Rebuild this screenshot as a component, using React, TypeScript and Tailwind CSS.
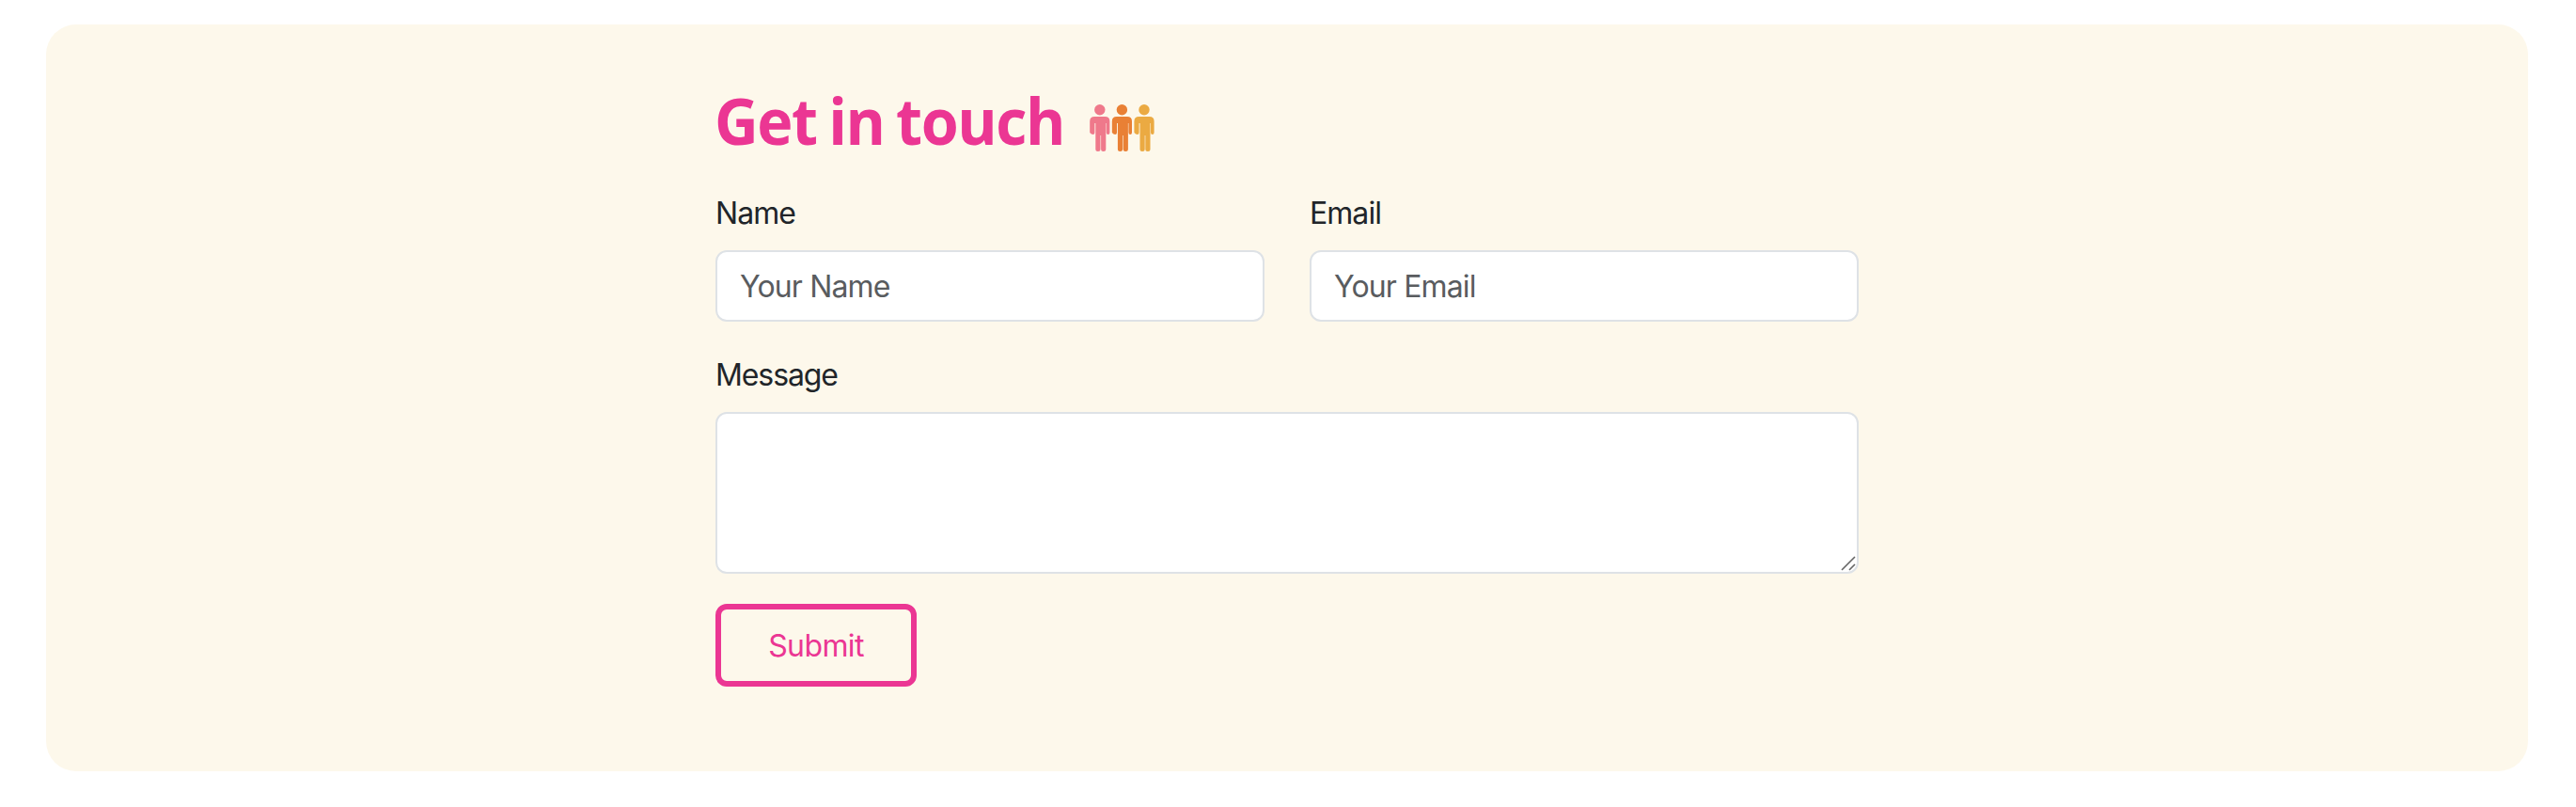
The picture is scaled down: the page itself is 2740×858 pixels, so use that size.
const people = [
  { x: 0, color: "#ef798b" },
  { x: 23.6, color: "#e98035" },
  { x: 47.2, color: "#ebaa42" },
];

function PeopleIcon() {
  return (
    <svg className="mt-[29px] ml-[28px] h-[50px] w-[69px] shrink-0" viewBox="0 0 69 50" aria-hidden="true">
      {people.map((p) => (
        <g key={p.color} transform={`translate(${p.x} 0)`} fill={p.color}>
          <circle cx="10.8" cy="5.8" r="5.7" />
          <path d="M5.2 12.9h11.2q5 0 5 5V30q0 1.9-1.8 1.9t-1.8-1.9V20h-.5v27.4q0 2.500-2.600 2.500t-2.600-2.500V33h-.6v14.400q0 2.500-2.600 2.500t-2.600-2.500V20h-.9V30q0 1.900-1.800 1.900T.2 30V17.900q0-5 5-5Z" />
        </g>
      ))}
    </svg>
  );
}

function Field({ id, label, placeholder, type }: { id: string; label: string; placeholder: string; type: string }) {
  return (
    <div className="flex flex-1 flex-col">
      <label htmlFor={id} className="h-12 pt-px text-[32px] leading-[48px] tracking-[-0.95px]">
        {label}
      </label>
      <input
        id={id}
        type={type}
        placeholder={placeholder}
        className="mt-4 h-[76px] w-full rounded-xl border-2 border-[#dee2e6] bg-white px-6 text-[32px] tracking-[-0.85px] outline-none placeholder:text-[#595c5f] placeholder:opacity-100"
      />
    </div>
  );
}

export default function App() {
  return (
    <main className="h-[858px] bg-white px-[49px] pt-[26px] font-['Inter','Liberation_Sans',sans-serif] text-[#212529]">
      <section className="h-[794px] w-[2640px] rounded-[32px] bg-[#fdf8eb] px-[712px] pt-[56px]">
        <div className="flex h-[120px]">
          <h1 className="-mt-0.5 -ml-px w-[371px] origin-left scale-x-[0.95] font-['Open_Sans','Noto_Sans',sans-serif] text-[68px] leading-[96px] font-[680] tracking-[-1.5px] [word-spacing:-3px] whitespace-nowrap text-[#eb3693]">
            Get in touch
          </h1>
          <PeopleIcon />
        </div>
        <form className="flex w-[1216px] flex-col items-start" onSubmit={(e) => e.preventDefault()}>
          <div className="flex w-full gap-12">
            <Field id="name" label="Name" placeholder="Your Name" type="text" />
            <Field id="email" label="Email" placeholder="Your Email" type="email" />
          </div>
          <label htmlFor="message" className="mt-8 h-12 pt-px text-[32px] leading-[48px] tracking-[-1.1px]">
            Message
          </label>
          <div className="relative mt-4 h-[172px] w-full">
            <textarea
              id="message"
              className="block h-full w-full resize-none rounded-xl border-2 border-[#dee2e6] bg-white px-6 py-3 text-[32px] outline-none"
            />
            <svg className="absolute right-[3px] bottom-[3px] size-4" viewBox="0 0 16 16" fill="none" stroke="#666" strokeWidth="1.6" aria-hidden="true">
              <path d="M1 15 15 1M9 15l6-6" />
            </svg>
          </div>
          <button className="mt-8 h-[88px] w-[214px] rounded-xl border-6 border-[#eb3693] pt-0.5 text-[32px] tracking-[-0.6px] text-[#eb3693]">
            Submit
          </button>
        </form>
      </section>
    </main>
  );
}
